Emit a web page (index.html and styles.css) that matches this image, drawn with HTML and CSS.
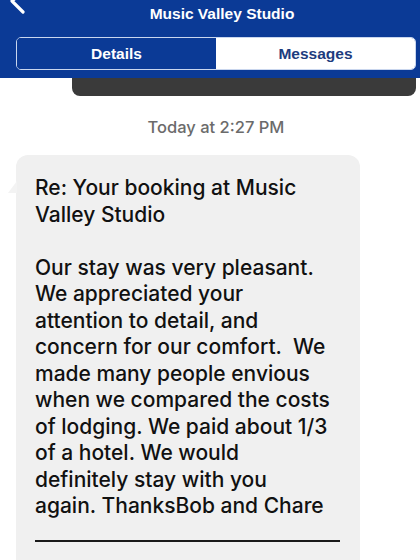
FILE: index.html
```html
<!DOCTYPE html>
<html>
<head>
<meta charset="utf-8">
<link rel="stylesheet" href="styles.css">
</head>
<body>
<header class="header">
  <svg class="back" width="20" height="20" viewBox="0 0 20 20"><path d="M20 -10 L7 1 L18 12" fill="none" stroke="#fff" stroke-width="3.2" stroke-linecap="round" stroke-linejoin="round"/></svg>
  <div class="title">Music Valley Studio</div>
  <div class="segmented">
    <div class="seg seg-active">Details</div>
    <div class="seg seg-idle">Messages</div>
  </div>
</header>
<div class="darkbar"></div>
<div class="timestamp">Today at 2:27 PM</div>
<div class="bubble-wrap">
  <div class="tail"></div>
  <div class="bubble">
    <p class="msg">Re: Your booking at Music<br>Valley Studio<br><br>Our stay was very pleasant.<br>We appreciated your<br>attention to detail, and<br>concern for our comfort.&nbsp; We<br>made many people envious<br>when we compared the costs<br>of lodging. We paid about 1/3<br>of a hotel. We would<br>definitely stay with you<br>again. ThanksBob and Chare</p>
    <div class="rule"></div>
  </div>
</div>
</body>
</html>
```

FILE: styles.css
```css
html, body {
  margin: 0;
  padding: 0;
  background: #ffffff;
  font-family: "Liberation Sans", Arial, sans-serif;
  overflow: hidden;
}
.header {
  position: relative;
  background: #0b3a96;
  height: 78px;
  box-sizing: border-box;
  padding: 4px 4px 0 16px;
}
.back {
  position: absolute;
  left: 5px;
  top: 0;
}
.title {
  color: #ffffff;
  font-weight: bold;
  font-size: 15.5px;
  line-height: 20px;
  text-align: center;
  padding-left: 12px;
}
.segmented {
  margin-top: 13px;
  height: 33px;
  display: flex;
  border: 1.5px solid #c9d6ee;
  border-radius: 5px;
  overflow: hidden;
  box-sizing: border-box;
}
.seg {
  flex: 1;
  display: flex;
  align-items: center;
  justify-content: center;
  font-weight: bold;
  font-size: 15.5px;
}
.seg-active {
  background: #0b3a96;
  color: #ffffff;
}
.seg-idle {
  background: #ffffff;
  color: #1d3c7e;
}
.darkbar {
  margin-left: 72px;
  margin-right: 4px;
  height: 18px;
  background: #3a3a3a;
  border-radius: 0 0 8px 8px;
}
.timestamp {
  margin-top: 21px;
  line-height: 20px;
  text-align: center;
  color: #6b6b6b;
  font-family: "Inter", "Liberation Sans", sans-serif;
  font-weight: 500;
  font-size: 16.5px;
  padding-left: 12px;
}
.bubble-wrap {
  position: relative;
  margin-top: 18px;
  margin-left: 16px;
  width: 344px;
}
.tail {
  position: absolute;
  left: -8px;
  top: 26px;
  width: 0;
  height: 0;
  border-top: 12px solid transparent;
  border-right: 9px solid #f3f3f3;
}
.bubble {
  background: #f0f0f0;
  border-radius: 12px;
  padding: 20px 19px 40px 19px;
}
.msg {
  margin: 0;
  font-family: "Inter", "Liberation Sans", sans-serif;
  font-weight: 500;
  font-size: 21px;
  line-height: 26.5px;
  color: #111111;
  white-space: nowrap;
}
.rule {
  margin-top: 20px;
  width: 305px;
  height: 2.5px;
  background: #1a1a1a;
}
```
